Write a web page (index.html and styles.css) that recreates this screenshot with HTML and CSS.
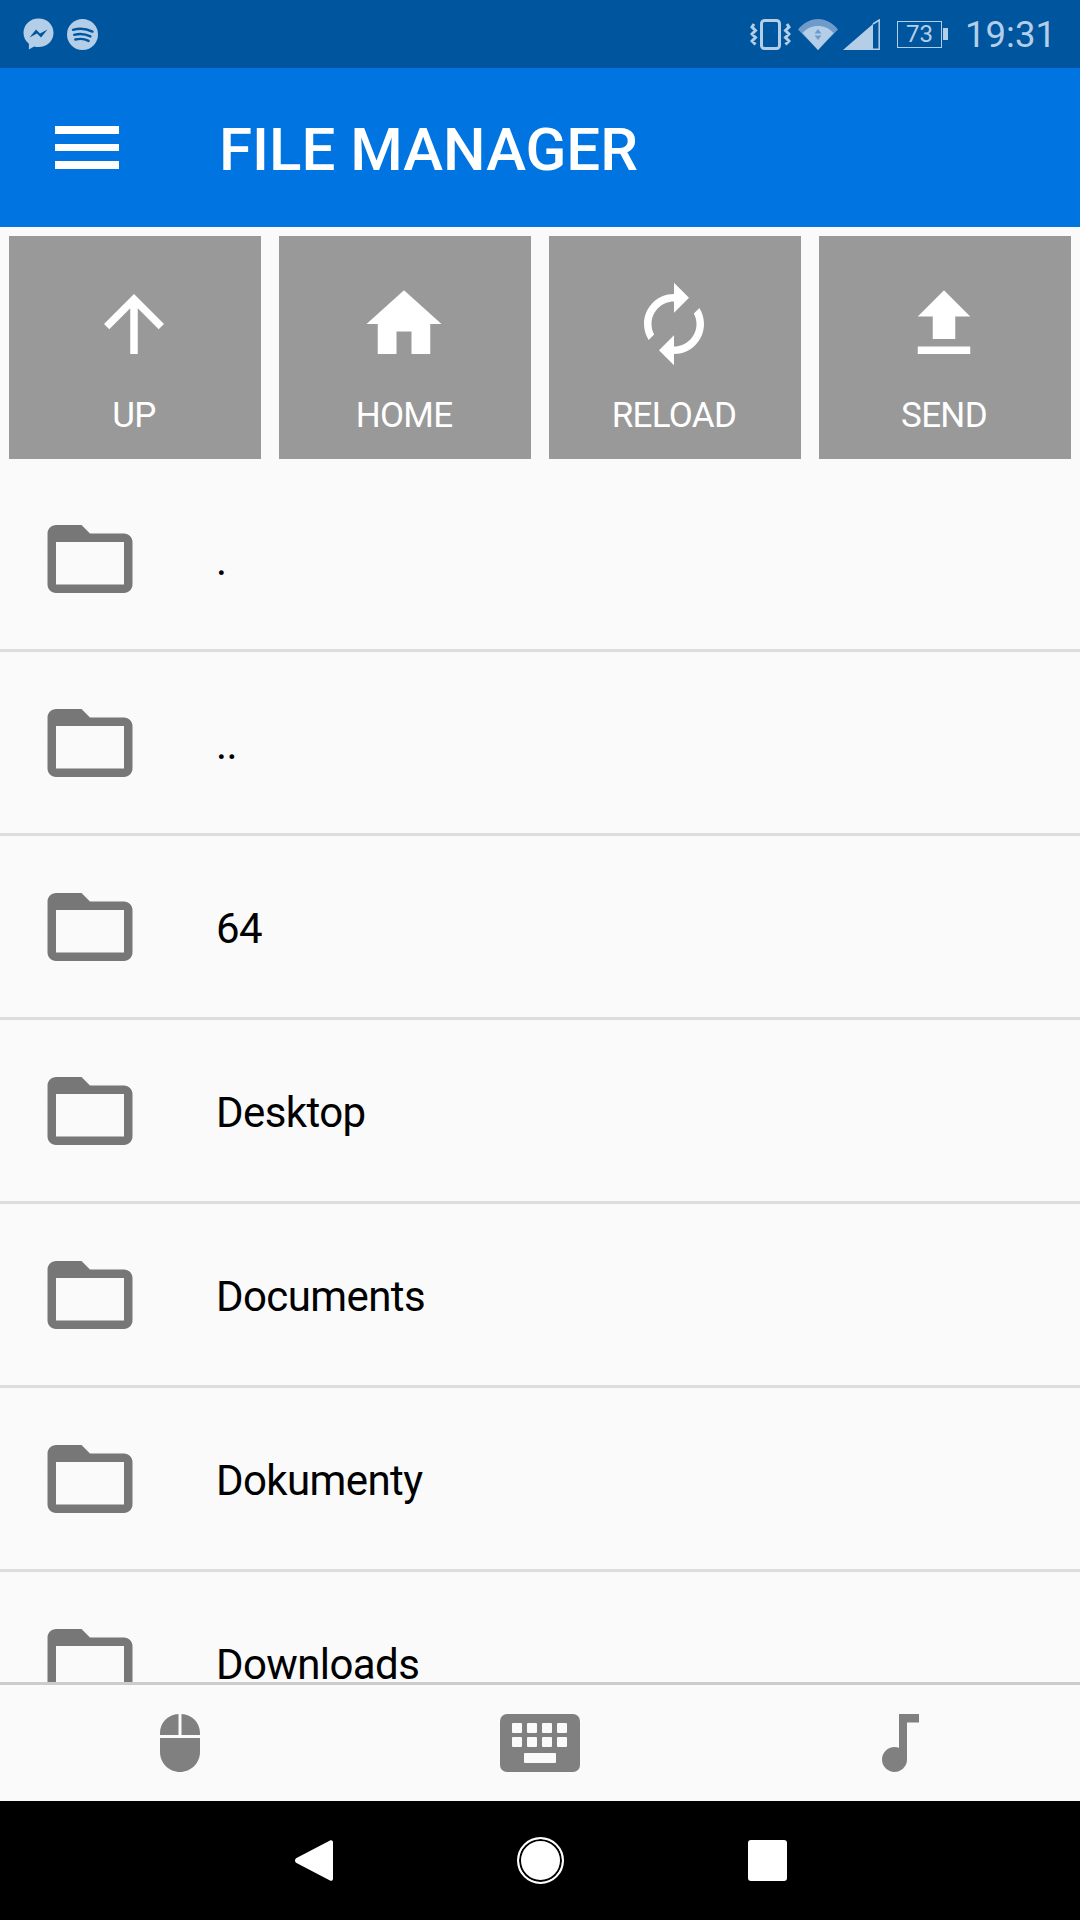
FILE: index.html
```html
<!DOCTYPE html>
<html lang="en">
<head>
    <meta charset="UTF-8">
    <meta name="viewport" content="width=device-width, initial-scale=1.0">
    <title>File Manager</title>
    <link rel="stylesheet" href="styles.css">
</head>
<body>
    <div class="status-bar">
        <div class="status-left">
            <svg class="status-app" viewBox="0 0 31 33">
                <path d="M15.500 0.500C7 0.500 0.500 6.800 0.500 14.800c0 4.500 2 8.400 5.400 11v5.700l5.200-3c1.400.4 2.900.6 4.400.6 8.500 0 15-6.100 15-14.300S24 .5 15.500.5z" fill="#b4cee8"/>
                <path d="M6.500 19.500l6.500-8 4 4 7.500-4-6.500 8-4-4z" fill="#00559f"/>
            </svg>
            <svg class="status-app" viewBox="0 0 31 31">
                <circle cx="15.500" cy="15.500" r="15.500" fill="#b4cee8"/>
                <path d="M6 10.800c6.500-1.800 13.500-1.200 19.500 1.800M7.200 15.800c5.500-1.400 11.200-.9 16.200 1.600M8.300 20.500c4.600-1.100 9.400-.7 13.300 1.400" fill="none" stroke="#00559f" stroke-width="2.400" stroke-linecap="round"/>
            </svg>
        </div>
        <div class="status-right">
            <svg class="icon-vibrate" viewBox="0 0 41 31">
                <rect x="11.500" y="1.500" width="18" height="28" rx="3" fill="none" stroke="#b4cee8" stroke-width="3"/>
                <path d="M4 5L2 8l3.500 3.500L2 15l3.500 3.500L2 22l3.500 3.500M37 5l2 3-3.500 3.500L39 15l-3.500 3.500L39 22l-3.500 3.500" fill="none" stroke="#b4cee8" stroke-width="3"/>
            </svg>
            <svg class="icon-wifi" viewBox="0 0 40 31">
                <path d="M0 10.500C5 4.500 12 0 20 0s15 4.500 20 10.500L20 31z" fill="#6f9bcb"/>
                <path d="M4.500 14C8.500 9.500 14 7 20 7s11.500 2.500 15.500 7L20 31z" fill="#b4cee8"/>
                <path d="M20 10l3.500 4.500h-7zM20 21l3.500-4.500h-7z" fill="#6f9bcb"/>
            </svg>
            <svg class="icon-signal" viewBox="0 0 37 31">
                <path d="M0 31L30 5v26z" fill="#b4cee8"/>
                <path d="M30 5L36.200 1v29.200H30" fill="none" stroke="#b4cee8" stroke-width="1.500"/>
            </svg>
            <div class="battery">73</div>
            <span class="clock">19:31</span>
        </div>
    </div>

    <header class="app-bar">
        <div class="menu-icon">
            <span></span>
            <span></span>
            <span></span>
        </div>
        <h1>FILE MANAGER</h1>
    </header>

    <div class="actions">
        <div class="action">
            <svg viewBox="0 0 24 24"><path d="M4 12l1.410 1.410L11 7.830V20h2V7.830l5.580 5.590L20 12l-8-8-8 8z"/></svg>
            <span>UP</span>
        </div>
        <div class="action">
            <svg viewBox="0 0 24 24"><path d="M10 20v-6h4v6h5v-8h3L12 3 2 12h3v8z"/></svg>
            <span>HOME</span>
        </div>
        <div class="action">
            <svg viewBox="0 0 24 24"><path d="M12 6v3l4-4-4-4v3c-4.420 0-8 3.580-8 8 0 1.570.460 3.030 1.240 4.260L6.700 14.800c-.450-.830-.700-1.790-.700-2.800 0-3.310 2.690-6 6-6zm6.760 1.740L17.300 9.200c.440.840.700 1.790.700 2.800 0 3.310-2.690 6-6 6v-3l-4 4 4 4v-3c4.420 0 8-3.580 8-8 0-1.570-.460-3.030-1.240-4.260z"/></svg>
            <span>RELOAD</span>
        </div>
        <div class="action">
            <svg viewBox="0 0 24 24"><path d="M9 16h6v-6h4l-7-7-7 7h4zm-4 2h14v2H5z"/></svg>
            <span>SEND</span>
        </div>
    </div>

    <div class="file-list">
        <div class="file-row">
            <svg class="folder" viewBox="0 0 24 24"><path d="M20 6h-8l-2-2H4c-1.100 0-1.990.900-1.990 2L2 18c0 1.100.900 2 2 2h16c1.100 0 2-.900 2-2V8c0-1.100-.900-2-2-2zm0 12H4V8h16v10z"/></svg>
            <span>.</span>
        </div>
        <div class="file-row">
            <svg class="folder" viewBox="0 0 24 24"><path d="M20 6h-8l-2-2H4c-1.100 0-1.990.900-1.990 2L2 18c0 1.100.900 2 2 2h16c1.100 0 2-.900 2-2V8c0-1.100-.900-2-2-2zm0 12H4V8h16v10z"/></svg>
            <span>..</span>
        </div>
        <div class="file-row">
            <svg class="folder" viewBox="0 0 24 24"><path d="M20 6h-8l-2-2H4c-1.100 0-1.990.900-1.990 2L2 18c0 1.100.900 2 2 2h16c1.100 0 2-.900 2-2V8c0-1.100-.900-2-2-2zm0 12H4V8h16v10z"/></svg>
            <span>64</span>
        </div>
        <div class="file-row">
            <svg class="folder" viewBox="0 0 24 24"><path d="M20 6h-8l-2-2H4c-1.100 0-1.990.900-1.990 2L2 18c0 1.100.900 2 2 2h16c1.100 0 2-.900 2-2V8c0-1.100-.900-2-2-2zm0 12H4V8h16v10z"/></svg>
            <span>Desktop</span>
        </div>
        <div class="file-row">
            <svg class="folder" viewBox="0 0 24 24"><path d="M20 6h-8l-2-2H4c-1.100 0-1.990.900-1.990 2L2 18c0 1.100.900 2 2 2h16c1.100 0 2-.900 2-2V8c0-1.100-.900-2-2-2zm0 12H4V8h16v10z"/></svg>
            <span>Documents</span>
        </div>
        <div class="file-row">
            <svg class="folder" viewBox="0 0 24 24"><path d="M20 6h-8l-2-2H4c-1.100 0-1.990.900-1.990 2L2 18c0 1.100.900 2 2 2h16c1.100 0 2-.900 2-2V8c0-1.100-.900-2-2-2zm0 12H4V8h16v10z"/></svg>
            <span>Dokumenty</span>
        </div>
        <div class="file-row">
            <svg class="folder" viewBox="0 0 24 24"><path d="M20 6h-8l-2-2H4c-1.100 0-1.990.900-1.990 2L2 18c0 1.100.900 2 2 2h16c1.100 0 2-.900 2-2V8c0-1.100-.900-2-2-2zm0 12H4V8h16v10z"/></svg>
            <span>Downloads</span>
        </div>
    </div>

    <div class="tabs">
        <div class="tab">
            <svg class="icon-mouse" viewBox="0 0 40 58">
                <path d="M18.500 0C8 .8 0 8.500 0 19v2h18.500zM21.500 0C32 .8 40 8.500 40 19v2H21.500zM0 24v14c0 11 9 20 20 20s20-9 20-20V24z"/>
            </svg>
        </div>
        <div class="tab">
            <svg class="icon-keyboard" viewBox="0 0 80 58">
                <rect width="80" height="58" rx="7"/>
                <g class="keys">
                    <rect x="12" y="9" width="10" height="10" rx="1"/>
                    <rect x="27" y="9" width="10" height="10" rx="1"/>
                    <rect x="42" y="9" width="10" height="10" rx="1"/>
                    <rect x="57" y="9" width="10" height="10" rx="1"/>
                    <rect x="12" y="23" width="10" height="10" rx="1"/>
                    <rect x="27" y="23" width="10" height="10" rx="1"/>
                    <rect x="42" y="23" width="10" height="10" rx="1"/>
                    <rect x="57" y="23" width="10" height="10" rx="1"/>
                    <rect x="24" y="39" width="32" height="10" rx="1"/>
                </g>
            </svg>
        </div>
        <div class="tab">
            <svg class="icon-music" viewBox="0 0 37 58">
                <circle cx="12.500" cy="45.500" r="12.500"/>
                <path d="M17 0h20v8.500H25V46h-8z"/>
            </svg>
        </div>
    </div>

    <div class="nav-bar">
        <svg class="nav-back" viewBox="0 0 38 43">
            <path d="M35 1.500c1.500-.8 3 0 3 2v36c0 2-1.500 2.800-3 2L1.500 24c-2-1.300-2-3.700 0-5z" fill="#fff"/>
        </svg>
        <div class="nav-home"></div>
        <div class="nav-recent"></div>
    </div>
</body>
</html>
```

FILE: styles.css
```css
* {
    margin: 0;
    padding: 0;
    box-sizing: border-box;
}
body {
    width: 1080px;
    height: 1920px;
    font-family: 'Roboto', sans-serif;
    background-color: #fafafa;
    color: #000;
    display: flex;
    flex-direction: column;
    overflow: hidden;
}
svg {
    display: block;
    flex: none;
}
.status-bar {
    height: 68px;
    flex: none;
    background-color: #00559f;
    display: flex;
    align-items: center;
    justify-content: space-between;
    padding: 0 24px 0 23px;
}
.status-left {
    display: flex;
    align-items: center;
    gap: 13px;
}
.status-app {
    width: 31px;
    height: 33px;
}
.status-right {
    display: flex;
    align-items: center;
    color: #b4cee8;
}
.icon-vibrate {
    width: 41px;
    height: 31px;
    margin-right: 7px;
}
.icon-wifi {
    width: 40px;
    height: 31px;
    margin-right: 5px;
}
.icon-signal {
    width: 37px;
    height: 31px;
    margin-right: 17px;
}
.battery {
    position: relative;
    width: 45px;
    height: 27px;
    margin-right: 23px;
    border: 1.5px solid #b4cee8;
    font-size: 24px;
    line-height: 24px;
    text-align: center;
}
.battery::after {
    content: "";
    position: absolute;
    top: 6px;
    right: -7px;
    width: 5px;
    height: 12px;
    background-color: #b4cee8;
}
.clock {
    padding-top: 1px;
    font-size: 36.500px;
    line-height: 40px;
}
.app-bar {
    height: 159px;
    flex: none;
    background-color: #0074e0;
    display: flex;
    align-items: center;
    padding-left: 55px;
    color: #fff;
}
.menu-icon {
    width: 64px;
    display: flex;
    flex-direction: column;
    gap: 10px;
    margin-right: 100px;
}
.menu-icon span {
    display: block;
    height: 7.500px;
    background-color: #fff;
}
.app-bar h1 {
    padding-top: 5px;
    font-size: 60px;
    font-weight: 500;
    line-height: 70px;
}
.actions {
    flex: none;
    display: grid;
    grid-template-columns: repeat(4, 1fr);
    gap: 18px;
    padding: 9px;
}
.action {
    height: 223px;
    background-color: #999;
    color: #fff;
    display: flex;
    flex-direction: column;
    align-items: center;
    padding: 43px 2px 0 0;
}
.action svg {
    width: 90px;
    height: 90px;
    fill: #fff;
}
.action span {
    margin-top: 27px;
    font-size: 35px;
    line-height: 40px;
    letter-spacing: -0.700px;
}
.file-list {
    flex: 1;
    min-height: 0;
    overflow: hidden;
}
.file-row {
    height: 184px;
    display: flex;
    align-items: center;
    gap: 75px;
    padding-left: 39px;
    border-bottom: 3px solid #ddd;
    font-size: 42px;
    letter-spacing: -0.600px;
}
.file-row span {
    padding-top: 3px;
}
.folder {
    width: 102px;
    height: 102px;
    fill: #777;
}
.tabs {
    height: 119px;
    flex: none;
    background-color: #fafafa;
    border-top: 3px solid #ccc;
    display: flex;
}
.tab {
    flex: 1;
    display: flex;
    align-items: center;
    justify-content: center;
}
.tab svg {
    fill: #808080;
}
.tab .keys {
    fill: #fafafa;
}
.icon-mouse {
    width: 40px;
    height: 58px;
}
.icon-keyboard {
    width: 80px;
    height: 58px;
}
.icon-music {
    width: 37px;
    height: 58px;
}
.nav-bar {
    height: 119px;
    flex: none;
    background-color: #000;
    display: flex;
    align-items: center;
    justify-content: center;
    gap: 184px;
    padding-left: 2px;
}
.nav-back {
    width: 38px;
    height: 43px;
}
.nav-home {
    width: 47px;
    height: 47px;
    border-radius: 50%;
    background-color: #fff;
    border: 2px solid #fff;
    box-shadow: inset 0 0 0 2px #000;
}
.nav-recent {
    width: 39px;
    height: 41px;
    border-radius: 3px;
    background-color: #fff;
}
```
